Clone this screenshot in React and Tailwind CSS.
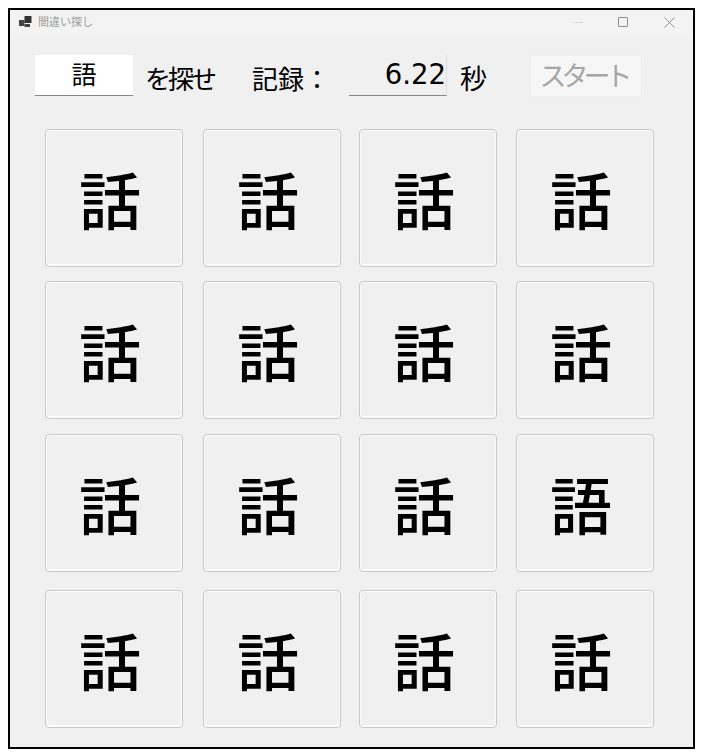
import React from 'react';

const FONT = '[font-family:Inter,"Noto_Sans_CJK_JP",sans-serif]';

// gaps between the cells are not even in the original form
const rows = [
  { mt: 'mt-0', chars: ['話', '話', '話', '話'] },
  { mt: 'mt-[14px]', chars: ['話', '話', '話', '話'] },
  { mt: 'mt-[15px]', chars: ['話', '話', '話', '語'] },
  { mt: 'mt-[18px]', chars: ['話', '話', '話', '話'] },
];
const colGaps = ['ml-0', 'ml-[20px]', 'ml-[18px]', 'ml-[19px]'];

function Cell({ char, gap }) {
  return (
    <button className={`${gap} flex h-[138px] w-[138px] items-center justify-center rounded-[4px] border border-[#c8c8c8] bg-[#f0f0f0] pr-[8px] pt-[9px] text-[62px] font-medium leading-none text-black shadow-[inset_0_0_0_1px_#fbfbfb,inset_-1px_-2px_0_0_#ffffff]`}>
      {char}
    </button>
  );
}

function TitleBar() {
  return (
    <div className="flex h-[28px] items-center bg-[#f3f3f3] pb-[4px] pl-[9px]">
      <svg width="13" height="12" viewBox="0 0 13 12" className="shrink-0">
        <rect x="0" y="4" width="5.5" height="6" fill="#444" />
        <rect x="5.5" y="0" width="7" height="7" fill="#333" />
        <rect x="5.5" y="8" width="5.5" height="3" fill="#444" />
      </svg>
      <span className="ml-[6px] text-[11px] leading-none text-[#9a9a9a]">間違い探し</span>
      <div className="ml-auto flex items-center pr-[18px]">
        <div className="h-px w-[10px] bg-[#d8d8d8]" />
        <div className="ml-[35px] h-[10px] w-[10px] rounded-[1px] border border-[#8f8f8f]" />
        <svg width="11" height="11" viewBox="0 0 11 11" className="ml-[36px]">
          <path d="M0.5 0.5L10.5 10.5M10.5 0.5L0.5 10.5" stroke="#8f8f8f" strokeWidth="1" fill="none" />
        </svg>
      </div>
    </div>
  );
}

function TopBar() {
  return (
    <div className="flex items-start pl-[25px] pt-[17px]">
      <div className="flex h-[41px] w-[98px] shrink-0 items-center justify-center border-b border-[#858585] bg-white text-[25px] leading-none text-black">語</div>
      <span className="ml-[12px] mt-[9px] shrink-0 text-[26px] leading-[32px] tracking-[-3px] text-black">を探せ</span>
      <span className="ml-[38px] mt-[9px] w-[78px] shrink-0 text-[26px] leading-[32px] text-black">記録：</span>
      <div className="ml-[19px] flex h-[41px] w-[98px] shrink-0 items-center justify-end border-r border-b border-r-[#e0e0e0] border-b-[#858585] bg-[#f0f0f0] font-['DejaVu_Sans'] text-[27.5px] leading-none text-black">6.22</div>
      <span className="ml-[13px] mt-[9px] shrink-0 text-[27px] leading-[32px] text-black">秒</span>
      <div className="ml-[43px] flex h-[42px] w-[112px] shrink-0 items-center justify-center rounded-[3px] border border-[#ededed] bg-[#f6f6f6] pr-[5px] text-[27px] leading-none tracking-[-5px] text-[#a6a6a6]">スタート</div>
    </div>
  );
}

export default function App() {
  return (
    <div className={`${FONT} h-[753px] w-[702px] bg-white pl-[8px] pt-[8px]`}>
      <div className="h-[741px] w-[687px] border-2 border-black bg-[#f0f0f0]">
        <TitleBar />
        <TopBar />
        <div className="pl-[35px] pt-[32px]">
          {rows.map((row, r) => (
            <div key={r} className={`flex ${row.mt}`}>
              {row.chars.map((c, i) => (
                <Cell key={i} char={c} gap={colGaps[i]} />
              ))}
            </div>
          ))}
        </div>
      </div>
    </div>
  );
}
